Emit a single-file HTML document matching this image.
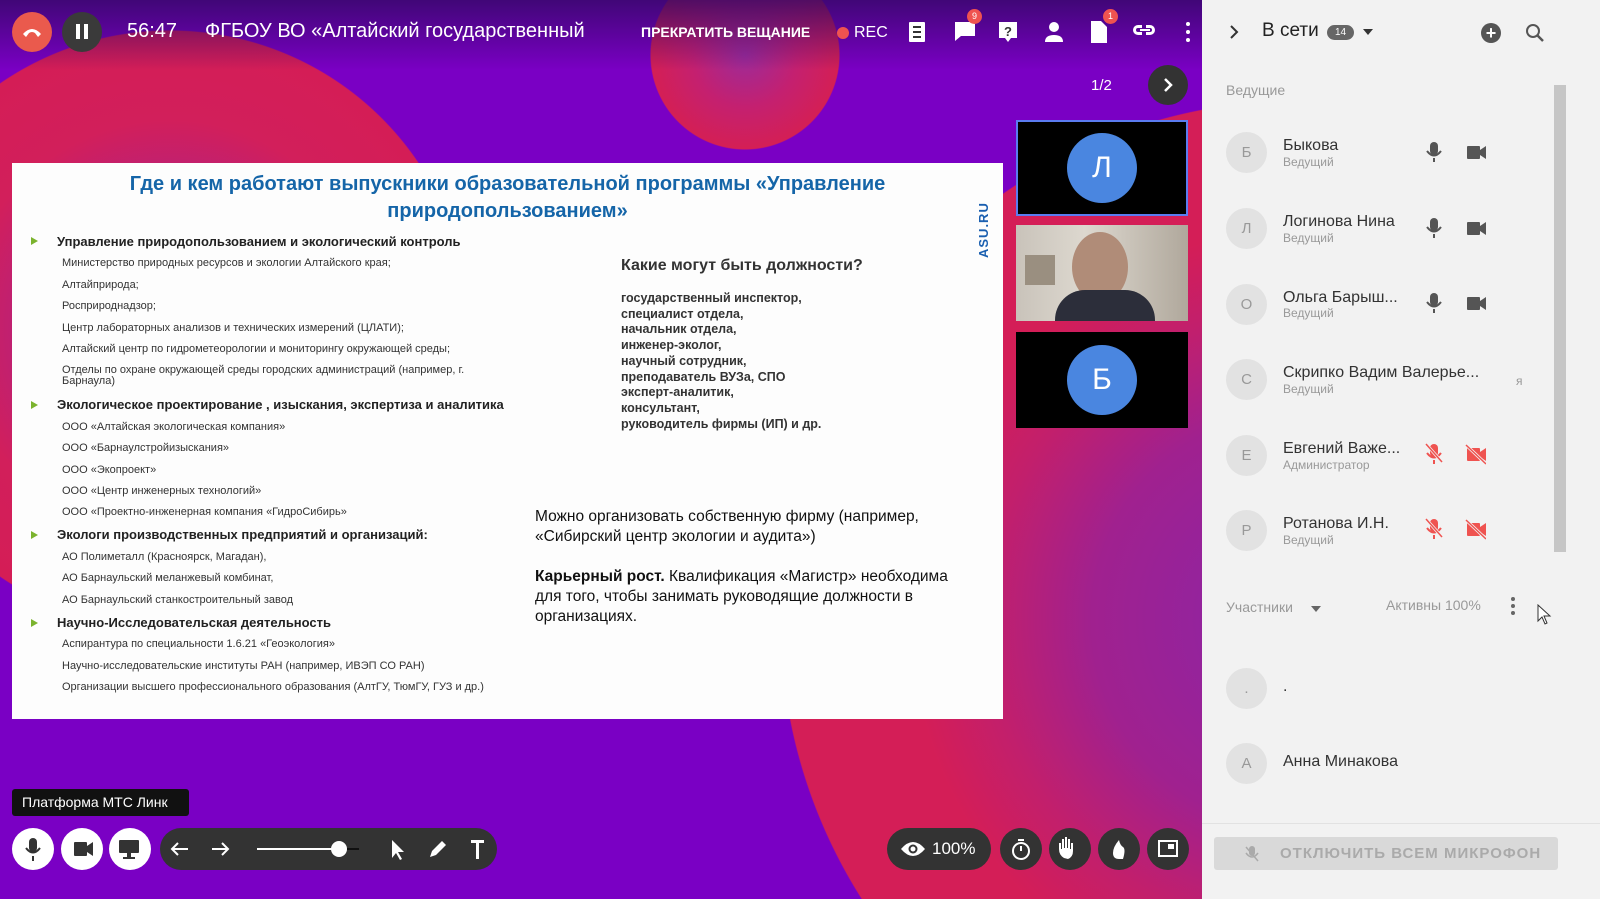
<!DOCTYPE html>
<html><head><meta charset="utf-8"><style>
*{margin:0;padding:0;box-sizing:border-box}
html,body{width:1600px;height:899px;overflow:hidden;background:#7a00c4}
body{font-family:"Liberation Sans","DejaVu Sans",sans-serif}
#root{position:relative;width:1600px;height:899px;overflow:hidden;background:
radial-gradient(circle 95px at 745px 55px,#9c2b9a 0,#c42070 52px,#d41f55 94px,rgba(212,31,85,0) 95px),
radial-gradient(circle 300px at 170px 330px,#9b2198 0,#b8207a 135px,#d21f5b 210px,#d41d56 299px,rgba(212,29,86,0) 300px),
radial-gradient(circle 520px at 1300px 620px,#8a25a8 0,#a0218f 208px,#c21f6c 312px,#d41e57 390px,#d41e57 519px,rgba(212,30,87,0) 520px),
#7a00c4}
.abs{position:absolute}
.circ{position:absolute;border-radius:50%}
.top{position:absolute;left:0;top:0;width:1202px;height:70px;background:linear-gradient(rgba(50,8,100,.8),rgba(122,0,196,0))}
.slide{left:12px;top:163px;width:991px;height:556px;background:#fdfdfd}
.s{position:absolute;font-size:11px;color:#333;white-space:nowrap}
.h{position:absolute;font-size:13px;font-weight:bold;color:#222;white-space:nowrap}
.tri{position:absolute;width:0;height:0;border-left:7px solid #7bb32e;border-top:4px solid transparent;border-bottom:4px solid transparent}
.wc{position:absolute;width:42px;height:42px;border-radius:50%;background:#fff;top:828px}
.dc{position:absolute;width:42px;height:42px;border-radius:50%;background:#333;top:828px}
.panel{position:absolute;left:1202px;top:0;width:398px;height:899px;background:#f2f2f2;overflow:hidden}
.av{position:absolute;left:24px;width:41px;height:41px;border-radius:50%;background:#e2e2e2;color:#999;font-size:15px;text-align:center;line-height:41px}
.nm{position:absolute;left:81px;font-size:16px;color:#333;white-space:nowrap}
.rl{position:absolute;left:81px;font-size:12px;color:#999}
</style></head><body><div id="root">
<div class="top"></div>

<div class="circ" style="left:12px;top:12px;width:40px;height:40px;background:#ea5a4d"></div>
<svg class="abs" style="left:20px;top:22px" width="24" height="20" viewBox="0 0 24 20"><path d="M3 12 Q12 2 21 12 L18 15 L15 11 Q12 9 9 11 L6 15Z" fill="#fff"/></svg>
<div class="circ" style="left:62px;top:12px;width:40px;height:40px;background:#3a3a3a"></div>
<div class="abs" style="left:76px;top:24px;width:4px;height:15px;background:#fff"></div><div class="abs" style="left:84px;top:24px;width:4px;height:15px;background:#fff"></div>
<div class="abs" style="left:127px;top:20px;color:#fff;font-size:20px">56:47</div>
<div class="abs" style="left:205px;top:20px;color:#fff;font-size:20px;white-space:nowrap">ФГБОУ ВО «Алтайский государственный</div>
<div class="abs" style="left:641px;top:24px;color:#fff;font-size:14px;font-weight:bold">ПРЕКРАТИТЬ ВЕЩАНИЕ</div>
<div class="circ" style="left:837px;top:27px;width:12px;height:12px;background:#ef5350"></div>
<div class="abs" style="left:854px;top:24px;color:#fff;font-size:16px">REC</div>
<svg class="abs" style="left:905px;top:18px" width="295" height="30" viewBox="0 0 295 30">
<g fill="#fff">
<rect x="4" y="4" width="16" height="20" rx="1"/>
<path d="M50 4h20v14H56l-6 5z"/>
<path d="M94 4h18v16h-6l-3 4-3-4h-6z"/>
<circle cx="149" cy="9" r="5"/><path d="M140 24q0-7 9-7t9 7z"/>
<path d="M186 3h10l6 6v16h-16z"/>
<path d="M228 12a5 5 0 0 1 5-5h4v3h-4a2 2 0 0 0 0 4h4v3h-4a5 5 0 0 1-5-5zm22 0a5 5 0 0 1-5 5h-4v-3h4a2 2 0 0 0 0-4h-4V7h4a5 5 0 0 1 5 5zm-15-1h10v2h-10z"/>
<circle cx="283" cy="6" r="2"/><circle cx="283" cy="14" r="2"/><circle cx="283" cy="22" r="2"/>
</g>
<g fill="#333"><rect x="8" y="8" width="8" height="2"/><rect x="8" y="13" width="8" height="2"/><rect x="8" y="18" width="8" height="2"/><text x="99" y="18" font-size="13" font-weight="bold" font-family="Liberation Sans">?</text></g>
</svg>
<div class="circ" style="left:967px;top:9px;width:15px;height:15px;background:#ef5350;color:#fff;font-size:9px;text-align:center;line-height:15px">9</div>
<div class="circ" style="left:1103px;top:9px;width:15px;height:15px;background:#ef5350;color:#fff;font-size:9px;text-align:center;line-height:15px">1</div>
<div class="abs" style="left:1091px;top:77px;color:#fff;font-size:15px">1/2</div>
<div class="circ" style="left:1148px;top:65px;width:40px;height:40px;background:#333"></div>
<svg class="abs" style="left:1160px;top:77px" width="16" height="16"><path d="M5 2l6 6-6 6" stroke="#fff" stroke-width="2.5" fill="none"/></svg>

<div class="abs slide">
<div class="abs" style="left:0;top:8px;width:991px;text-align:center;color:#1565a8;font-size:20px;font-weight:bold;line-height:27px">Где и кем работают выпускники образовательной программы «Управление<br>природопользованием»</div>
<div class="abs" style="left:964px;color:#1a5fb0;font-size:13px;font-weight:bold;transform:rotate(-90deg);transform-origin:0 0;top:95px;letter-spacing:1px">ASU.RU</div>
<div class="tri" style="left:19px;top:74px"></div><div class="h" style="left:45px;top:71px">Управление природопользованием и экологический контроль</div>
<div class="s" style="left:50px;top:94px">Министерство природных ресурсов и экологии Алтайского края;</div>
<div class="s" style="left:50px;top:116px">Алтайприрода;</div>
<div class="s" style="left:50px;top:137px">Росприроднадзор;</div>
<div class="s" style="left:50px;top:159px">Центр лабораторных анализов и технических измерений (ЦЛАТИ);</div>
<div class="s" style="left:50px;top:180px">Алтайский центр по гидрометеорологии и мониторингу окружающей среды;</div>
<div class="s" style="left:50px;top:202px;line-height:11px">Отделы по охране окружающей среды городских администраций (например, г.<br>Барнаула)</div>
<div class="tri" style="left:19px;top:238px"></div><div class="h" style="left:45px;top:234px">Экологическое проектирование , изыскания, экспертиза и аналитика</div>
<div class="s" style="left:50px;top:258px">ООО «Алтайская экологическая компания»</div>
<div class="s" style="left:50px;top:279px">ООО «Барнаулстройизыскания»</div>
<div class="s" style="left:50px;top:301px">ООО «Экопроект»</div>
<div class="s" style="left:50px;top:322px">ООО «Центр инженерных технологий»</div>
<div class="s" style="left:50px;top:343px">ООО «Проектно-инженерная компания «ГидроСибирь»</div>
<div class="tri" style="left:19px;top:368px"></div><div class="h" style="left:45px;top:364px">Экологи производственных предприятий и организаций:</div>
<div class="s" style="left:50px;top:388px">АО Полиметалл (Красноярск, Магадан),</div>
<div class="s" style="left:50px;top:409px">АО Барнаульский меланжевый комбинат,</div>
<div class="s" style="left:50px;top:431px">АО Барнаульский станкостроительный завод</div>
<div class="tri" style="left:19px;top:456px"></div><div class="h" style="left:45px;top:452px">Научно-Исследовательская деятельность</div>
<div class="s" style="left:50px;top:475px">Аспирантура по специальности 1.6.21 «Геоэкология»</div>
<div class="s" style="left:50px;top:497px">Научно-исследовательские институты РАН (например, ИВЭП СО РАН)</div>
<div class="s" style="left:50px;top:518px">Организации высшего профессионального образования (АлтГУ, ТюмГУ, ГУЗ и др.)</div>
<div class="abs" style="left:609px;top:94px;font-size:16px;font-weight:bold;color:#333">Какие могут быть должности?</div>
<div class="abs" style="left:609px;top:128px;font-size:12.5px;font-weight:bold;color:#333;line-height:15.7px;white-space:nowrap">государственный инспектор,<br>специалист отдела,<br>начальник отдела,<br>инженер-эколог,<br>научный сотрудник,<br>преподаватель ВУЗа, СПО<br>эксперт-аналитик,<br>консультант,<br>руководитель фирмы (ИП) и др.</div>
<div class="abs" style="left:523px;top:344px;font-size:15.5px;color:#111;line-height:20px;white-space:nowrap">Можно организовать собственную фирму (например,<br>«Сибирский центр экологии и аудита»)</div>
<div class="abs" style="left:523px;top:404px;font-size:15.5px;color:#111;line-height:20px;white-space:nowrap"><b>Карьерный рост.</b> Квалификация «Магистр» необходима<br>для того, чтобы занимать руководящие должности в<br>организациях.</div>
</div>

<div class="abs" style="left:1016px;top:120px;width:172px;height:96px;background:#000;border:2px solid #5b7cf0"></div>
<div class="circ" style="left:1067px;top:133px;width:70px;height:70px;background:#4a86e0;color:#fff;font-size:30px;text-align:center;line-height:70px">Л</div>
<div class="abs" style="left:1016px;top:225px;width:172px;height:96px;background:linear-gradient(90deg,#c9c3ba,#ddd8cf 40%,#b0a89c);overflow:hidden">
<div class="abs" style="left:9px;top:30px;width:30px;height:30px;background:#9a8f80"></div>
<div class="circ" style="left:56px;top:7px;width:56px;height:70px;background:#b08c78"></div>
<div class="abs" style="left:39px;top:65px;width:100px;height:31px;background:#2c2e3a;border-radius:30px 30px 0 0"></div>
</div>
<div class="abs" style="left:1016px;top:332px;width:172px;height:96px;background:#000"></div>
<div class="circ" style="left:1067px;top:345px;width:70px;height:70px;background:#4a86e0;color:#fff;font-size:30px;text-align:center;line-height:70px">Б</div>

<div class="abs" style="left:12px;top:789px;width:177px;height:27px;background:#111;border-radius:3px;color:#fff;font-size:14px;line-height:27px;padding-left:10px">Платформа МТС Линк</div>
<div class="wc" style="left:12px"></div><div class="wc" style="left:61px"></div><div class="wc" style="left:109px"></div>
<svg class="abs" style="left:12px;top:828px" width="150" height="42"><g fill="#333"><rect x="17" y="10" width="8" height="14" rx="4"/><path d="M14 20q7 9 14 0" stroke="#333" stroke-width="2" fill="none"/><rect x="20" y="28" width="2" height="5"/><rect x="62" y="14" width="13" height="14" rx="1"/><path d="M75 18l6-4v14l-6-4z"/><rect x="107" y="12" width="20" height="13" rx="1"/><rect x="115" y="25" width="4" height="4"/><rect x="111" y="29" width="12" height="2"/></g></svg>
<div class="abs" style="left:160px;top:828px;width:337px;height:42px;background:#333;border-radius:21px"></div>
<svg class="abs" style="left:160px;top:828px" width="337" height="42"><g stroke="#fff" stroke-width="2" fill="none"><path d="M28 21H12M18 15l-6 6 6 6"/><path d="M52 21h16M62 15l6 6-6 6"/></g><rect x="97" y="20" width="80" height="2" fill="#fff"/><rect x="177" y="20" width="22" height="2" fill="#111"/><circle cx="179" cy="21" r="8" fill="#fff"/><path d="M232 12l0 18 4-5 4 7 2-1-4-7 6 0z" fill="#fff"/><path d="M270 29l2-6 10-10 4 4-10 10z" fill="#fff"/><path d="M311 12h13v3h-5v16h-3V15h-5z" fill="#fff"/></svg>
<div class="abs" style="left:887px;top:828px;width:104px;height:42px;background:#333;border-radius:21px"></div>
<svg class="abs" style="left:900px;top:839px" width="26" height="20"><path d="M1 10q12-14 24 0q-12 14-24 0z" fill="#fff"/><circle cx="13" cy="10" r="4.5" fill="#333"/><circle cx="13" cy="10" r="2.5" fill="#fff"/></svg>
<div class="abs" style="left:932px;top:839px;color:#fff;font-size:17px">100%</div>
<div class="dc" style="left:1000px"></div><div class="dc" style="left:1049px"></div><div class="dc" style="left:1098px"></div><div class="dc" style="left:1147px"></div>
<svg class="abs" style="left:1000px;top:828px" width="190" height="42"><g stroke="#fff" stroke-width="2" fill="none"><circle cx="21" cy="23" r="8"/><path d="M21 23v-5M18 12h6"/><rect x="159" y="13" width="18" height="15"/></g><path d="M64 30q-5-3-5-9v-6h2v6h1V11h2v9h1V9h2v11h1V11h2v10h1v-6h2v8q0 6-5 8z" fill="#fff"/><path d="M119 31q-6 0-6-6t6-13q1 5 4 7t0 12q-1 0-4 0z" fill="#fff"/><rect x="168" y="16" width="6" height="5" fill="#fff"/></svg>

<div class="panel">
<svg class="abs" style="left:26px;top:24px" width="14" height="16"><path d="M3 2l6 6-6 6" stroke="#333" stroke-width="2" fill="none"/></svg>
<div class="abs" style="left:60px;top:20px;font-size:19px;color:#222">В сети</div>
<div class="abs" style="left:125px;top:25px;width:27px;height:15px;border-radius:8px;background:#666;color:#fff;font-size:10px;text-align:center;line-height:15px">14</div>
<svg class="abs" style="left:160px;top:28px" width="12" height="8"><path d="M1 1h10l-5 6z" fill="#333"/></svg>
<div class="circ" style="left:279px;top:23px;width:20px;height:20px;background:#555;color:#fff;font-size:18px;text-align:center;line-height:20px;font-weight:bold">+</div>
<svg class="abs" style="left:322px;top:22px" width="22" height="22"><circle cx="9" cy="9" r="6" stroke="#555" stroke-width="2" fill="none"/><path d="M13 13l6 6" stroke="#555" stroke-width="2.5"/></svg>
<div class="abs" style="left:24px;top:82px;font-size:14px;color:#999">Ведущие</div>
<div class="abs" style="left:352px;top:85px;width:12px;height:467px;background:#c6c6c6"></div>

<div class="av" style="top:132px">Б</div><div class="nm" style="top:137px">Быкова</div><div class="rl" style="top:155px">Ведущий</div>
<div class="av" style="top:208px">Л</div><div class="nm" style="top:213px">Логинова Нина</div><div class="rl" style="top:231px">Ведущий</div>
<div class="av" style="top:284px">О</div><div class="nm" style="top:289px">Ольга Барыш...</div><div class="rl" style="top:306px">Ведущий</div>
<div class="av" style="top:359px">С</div><div class="nm" style="top:364px">Скрипко Вадим Валерье...</div><div class="rl" style="top:382px">Ведущий</div>
<div class="abs" style="left:314px;top:374px;font-size:12px;color:#999">я</div>
<div class="av" style="top:435px">Е</div><div class="nm" style="top:440px">Евгений Важе...</div><div class="rl" style="top:458px">Администратор</div>
<div class="av" style="top:510px">Р</div><div class="nm" style="top:515px">Ротанова И.Н.</div><div class="rl" style="top:533px">Ведущий</div>
<svg class="abs" style="left:220px;top:140px" width="64" height="400">
<g fill="#555"><rect x="8" y="2" width="8" height="13" rx="4"/><path d="M5 11q7 9 14 0" stroke="#555" stroke-width="2" fill="none"/><rect x="11" y="18" width="2" height="4"/><rect x="45" y="6" width="13" height="13" rx="1"/><path d="M58 10l6-4v13l-6-4z"/></g>
<g fill="#555" transform="translate(0,76)"><rect x="8" y="2" width="8" height="13" rx="4"/><path d="M5 11q7 9 14 0" stroke="#555" stroke-width="2" fill="none"/><rect x="11" y="18" width="2" height="4"/><rect x="45" y="6" width="13" height="13" rx="1"/><path d="M58 10l6-4v13l-6-4z"/></g>
<g fill="#555" transform="translate(0,151)"><rect x="8" y="2" width="8" height="13" rx="4"/><path d="M5 11q7 9 14 0" stroke="#555" stroke-width="2" fill="none"/><rect x="11" y="18" width="2" height="4"/><rect x="45" y="6" width="13" height="13" rx="1"/><path d="M58 10l6-4v13l-6-4z"/></g>
<g fill="#ef5350" transform="translate(0,302)"><rect x="8" y="2" width="8" height="13" rx="4"/><path d="M5 11q7 9 14 0" stroke="#ef5350" stroke-width="2" fill="none"/><rect x="11" y="18" width="2" height="4"/><path d="M4 2l16 18" stroke="#f2f2f2" stroke-width="3"/><path d="M4 2l16 18" stroke="#ef5350" stroke-width="1.5"/><rect x="45" y="6" width="13" height="13" rx="1"/><path d="M58 10l6-4v13l-6-4z"/><path d="M44 3l20 19" stroke="#f2f2f2" stroke-width="3"/><path d="M44 3l20 19" stroke="#ef5350" stroke-width="1.5"/></g>
<g fill="#ef5350" transform="translate(0,377)"><rect x="8" y="2" width="8" height="13" rx="4"/><path d="M5 11q7 9 14 0" stroke="#ef5350" stroke-width="2" fill="none"/><rect x="11" y="18" width="2" height="4"/><path d="M4 2l16 18" stroke="#f2f2f2" stroke-width="3"/><path d="M4 2l16 18" stroke="#ef5350" stroke-width="1.5"/><rect x="45" y="6" width="13" height="13" rx="1"/><path d="M58 10l6-4v13l-6-4z"/><path d="M44 3l20 19" stroke="#f2f2f2" stroke-width="3"/><path d="M44 3l20 19" stroke="#ef5350" stroke-width="1.5"/></g>
</svg>
<div class="abs" style="left:24px;top:599px;font-size:14px;color:#999">Участники</div>
<svg class="abs" style="left:108px;top:605px" width="12" height="8"><path d="M1 1h10l-5 6z" fill="#666"/></svg>
<div class="abs" style="left:184px;top:597px;font-size:14px;color:#999">Активны 100%</div>
<svg class="abs" style="left:307px;top:596px" width="8" height="20"><circle cx="4" cy="3" r="2" fill="#666"/><circle cx="4" cy="10" r="2" fill="#666"/><circle cx="4" cy="17" r="2" fill="#666"/></svg>
<svg class="abs" style="left:334px;top:604px" width="16" height="22"><path d="M2 1v16l4-4 3 7 2-1-3-7h6z" fill="#fff" stroke="#333" stroke-width="1"/></svg>
<div class="av" style="top:668px">.</div><div class="nm" style="top:678px">.</div>
<div class="av" style="top:743px">А</div><div class="nm" style="top:753px">Анна Минакова</div>
<div class="abs" style="left:0;top:823px;width:398px;height:76px;background:#f2f2f2;border-top:1px solid #e2e2e2"></div>
<div class="abs" style="left:12px;top:837px;width:344px;height:33px;background:#d9d9d9;border-radius:3px;color:#aaa;font-size:15px;font-weight:bold;letter-spacing:1px;line-height:33px;padding-left:66px">ОТКЛЮЧИТЬ ВСЕМ МИКРОФОН</div>
<svg class="abs" style="left:42px;top:845px" width="16" height="18"><rect x="5" y="1" width="6" height="10" rx="3" fill="#aaa"/><path d="M2 8q6 8 12 0" stroke="#aaa" stroke-width="1.5" fill="none"/><path d="M2 2l12 14" stroke="#aaa" stroke-width="1.5"/></svg>
</div>
</div></body></html>
